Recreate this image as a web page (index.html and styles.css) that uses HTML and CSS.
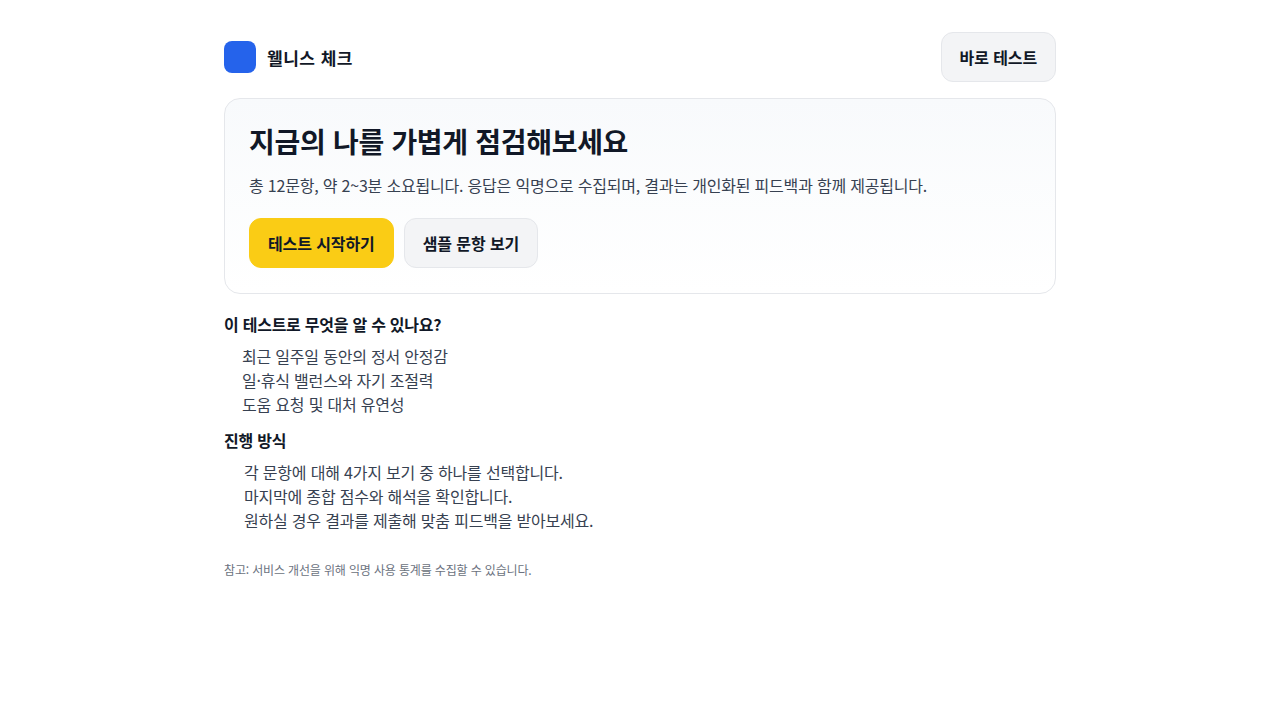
FILE: index.html
```html
<!DOCTYPE html>
<html lang="ko">
<head>
<meta charset="utf-8">
<title>웰니스 체크</title>
<link rel="stylesheet" href="styles.css">
</head>
<body>
<div class="page">
  <header class="topbar">
    <div class="brand">
      <span class="logo"></span>
      <span class="brand-name">웰니스 체크</span>
    </div>
    <button class="btn btn-ghost">바로 테스트</button>
  </header>

  <section class="hero">
    <h1 class="hero-title">지금의 나를 가볍게 점검해보세요</h1>
    <p class="hero-desc">총 12문항, 약 2~3분 소요됩니다. 응답은 익명으로 수집되며, 결과는 개인화된 피드백과 함께 제공됩니다.</p>
    <div class="actions">
      <button class="btn btn-primary">테스트 시작하기</button>
      <button class="btn btn-ghost">샘플 문항 보기</button>
    </div>
  </section>

  <section class="info">
    <h2 class="info-title">이 테스트로 무엇을 알 수 있나요?</h2>
    <ul class="list list-ul">
      <li>최근 일주일 동안의 정서 안정감</li>
      <li>일·휴식 밸런스와 자기 조절력</li>
      <li>도움 요청 및 대처 유연성</li>
    </ul>
    <h2 class="info-title">진행 방식</h2>
    <ol class="list list-ol">
      <li>각 문항에 대해 4가지 보기 중 하나를 선택합니다.</li>
      <li>마지막에 종합 점수와 해석을 확인합니다.</li>
      <li>원하실 경우 결과를 제출해 맞춤 피드백을 받아보세요.</li>
    </ol>
  </section>

  <p class="note">참고: 서비스 개선을 위해 익명 사용 통계를 수집할 수 있습니다.</p>
</div>
</body>
</html>
```

FILE: styles.css
```css
* { box-sizing: border-box; }
html, body { margin: 0; padding: 0; background: #ffffff; }
body {
  font-family: "Noto Sans CJK KR", "Noto Sans", sans-serif;
  color: #111827;
}
.page {
  width: 832px;
  margin: 0 auto;
  padding-top: 32px;
}
.topbar {
  display: flex;
  align-items: center;
  justify-content: space-between;
  height: 50px;
}
.brand {
  display: flex;
  align-items: center;
  gap: 11px;
}
.logo {
  width: 32px;
  height: 32px;
  border-radius: 8px;
  background: #2563eb;
  display: block;
}
.brand-name {
  font-size: 17px;
  font-weight: 700;
  letter-spacing: 0.5px;
  color: #111827;
}
.btn {
  font-family: inherit;
  font-size: 16px;
  font-weight: 700;
  height: 50px;
  padding: 0 18px;
  border-radius: 12px;
  cursor: pointer;
  color: #111827;
  line-height: 1;
  letter-spacing: -0.1px;
}
.btn-ghost {
  background: #f3f4f6;
  border: 1px solid #e5e7eb;
}
.btn-primary {
  background: #facc15;
  border: 1px solid #facc15;
}
.hero {
  margin-top: 16px;
  border: 1px solid #e5e7eb;
  border-radius: 16px;
  padding: 22px 24px 25px;
  background: linear-gradient(180deg, #f8fafc 0%, #ffffff 100%);
}
.hero-title {
  margin: 0;
  font-size: 28px;
  font-weight: 700;
  line-height: 40px;
  letter-spacing: -0.3px;
  color: #111827;
}
.hero-desc {
  margin: 12px 0 21px;
  font-size: 16px;
  line-height: 24px;
  letter-spacing: -0.2px;
  color: #374151;
}
.actions {
  display: flex;
  gap: 10px;
}
.info { margin-top: 18px; }
.info-title {
  margin: 0;
  font-size: 16px;
  font-weight: 700;
  line-height: 24px;
  letter-spacing: -0.25px;
  color: #111827;
}
.list {
  list-style: none;
  margin: 8px 0 12px;
  font-size: 16px;
  line-height: 24px;
  letter-spacing: -0.2px;
  color: #374151;
}
.list-ul { padding-left: 18px; }
.list-ol { padding-left: 20px; }
.note {
  margin: 29px 0 0;
  font-size: 12px;
  line-height: 18px;
  letter-spacing: -0.15px;
  color: #6b7280;
}
```
